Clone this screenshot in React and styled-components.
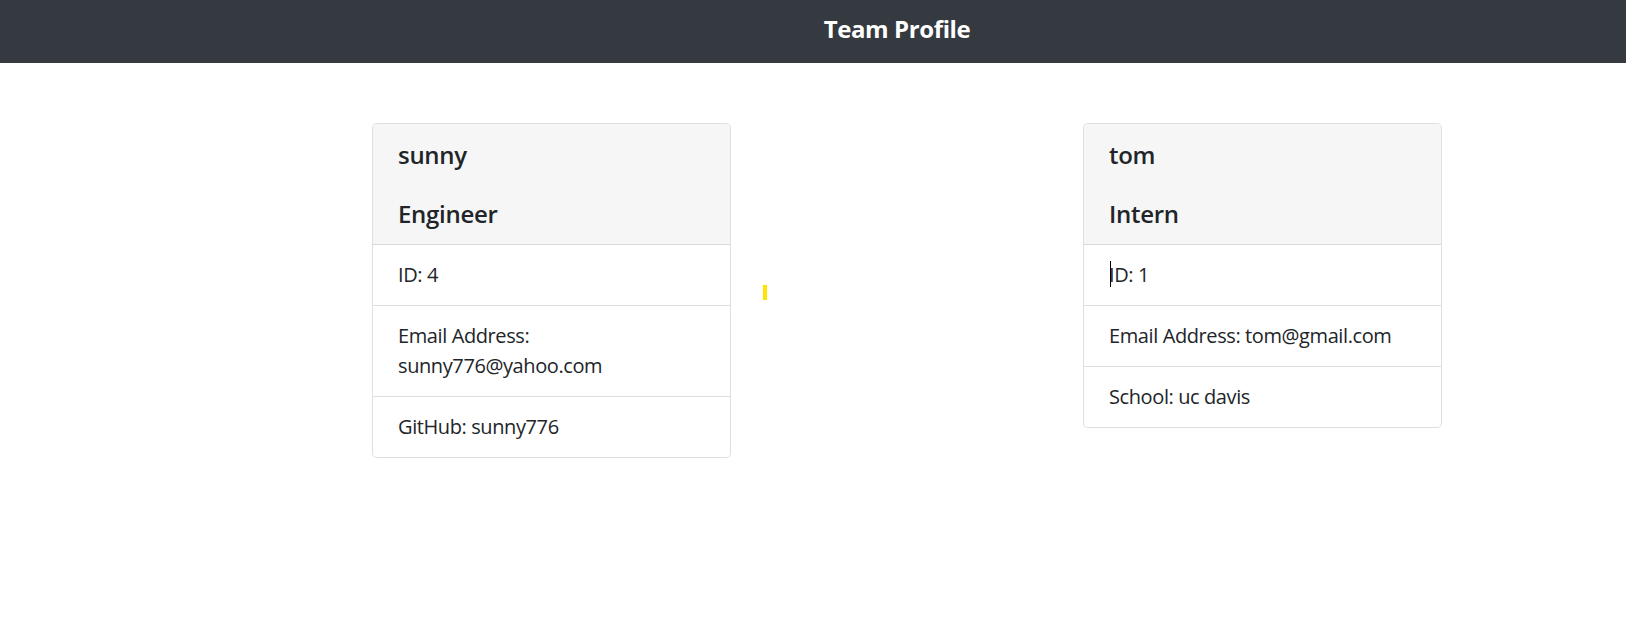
import React from "react";
import styled, { createGlobalStyle } from "styled-components";

const GlobalStyle = createGlobalStyle`
  html, body {
    margin: 0;
    padding: 0;
    background: #ffffff;
    font-family: "Open Sans", "Noto Sans", "Liberation Sans", sans-serif;
    color: #212529;
  }
`;

const NavBar = styled.header`
  display: flex;
  justify-content: center;
  align-items: center;
  height: 63px;
  padding: 0 0 6px 168px;
  box-sizing: border-box;
  background: #343a40;
`;

const Brand = styled.h1`
  margin: 0;
  font-size: 24px;
  line-height: 36px;
  font-weight: 700;
  color: #ffffff;
  letter-spacing: -0.4px;
`;

const CardRow = styled.main`
  display: flex;
  align-items: flex-start;
  padding: 60px 0 0 372px;
`;

const Card = styled.section`
  width: 359px;
  box-sizing: border-box;
  border: 1px solid rgba(0, 0, 0, 0.125);
  border-radius: 5px;
  overflow: hidden;
  background: #ffffff;
`;

const CardHeader = styled.div`
  padding: 13px 25px 12px;
  background: #f6f6f6;
  border-bottom: 1px solid rgba(0, 0, 0, 0.125);
`;

const Name = styled.h2`
  margin: 0 0 23px;
  font-size: 24px;
  line-height: 36px;
  font-weight: 600;
  letter-spacing: -0.3px;
`;

const Role = styled.h3`
  margin: 0;
  font-size: 24px;
  line-height: 36px;
  font-weight: 600;
  letter-spacing: -0.3px;
`;

const List = styled.ul`
  list-style: none;
  margin: 0;
  padding: 0;
`;

const Item = styled.li`
  position: relative;
  padding: 15px 25px;
  font-size: 20px;
  line-height: 30px;
  letter-spacing: -0.4px;
  border-bottom: 1px solid rgba(0, 0, 0, 0.125);

  &:last-child {
    border-bottom: none;
  }
`;

const Caret = styled.span`
  position: absolute;
  left: 26px;
  top: 16px;
  width: 1px;
  height: 26px;
  background: #000000;
`;

const Marker = styled.div`
  width: 4px;
  height: 15px;
  margin: 162px 316px 0 32px;
  background: #ffe400;
`;

const team = [
  {
    name: "sunny",
    role: "Engineer",
    rows: ["ID: 4", "Email Address: sunny776@yahoo.com", "GitHub: sunny776"],
  },
  {
    name: "tom",
    role: "Intern",
    rows: ["ID: 1", "Email Address: tom@gmail.com", "School: uc davis"],
    caret: true,
  },
];

const ProfileCard = ({ member }) => (
  <Card>
    <CardHeader>
      <Name>{member.name}</Name>
      <Role>{member.role}</Role>
    </CardHeader>
    <List>
      {member.rows.map((row, i) => (
        <Item key={row}>
          {member.caret && i === 0 && <Caret />}
          {row}
        </Item>
      ))}
    </List>
  </Card>
);

const App = () => {
  return (
    <>
      <GlobalStyle />
      <NavBar>
        <Brand>Team Profile</Brand>
      </NavBar>
      <CardRow>
        <ProfileCard member={team[0]} />
        <Marker />
        <ProfileCard member={team[1]} />
      </CardRow>
    </>
  );
};

export default App;
